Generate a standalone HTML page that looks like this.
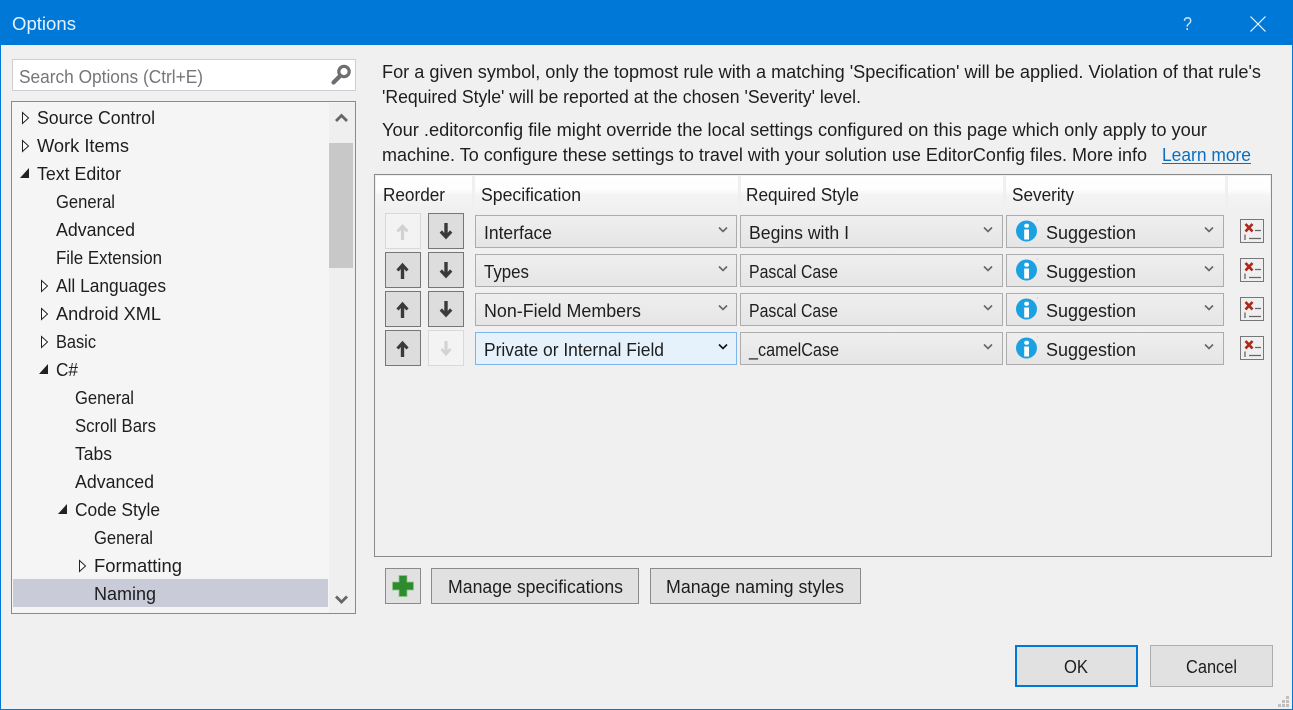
<!DOCTYPE html>
<html><head><meta charset="utf-8"><title>Options</title>
<style>
html,body{margin:0;padding:0;background:#f0f0f0;overflow:hidden}
svg{display:block}
text{font-family:"Liberation Sans",sans-serif;font-size:18px;fill:#1e1e1e}
.btn{fill:#e1e1e1;stroke:#8a8a8a;stroke-width:1}
.ab{fill:#dddddd;stroke:#767676;stroke-width:1}
.dis{fill:#f3f3f3;stroke:#d9d9d9;stroke-width:1}
.cb{fill:url(#cbg);stroke:#acacac;stroke-width:1}
.chev{fill:none;stroke:#666;stroke-width:1.6}
.open{fill:#fff;stroke:#222;stroke-width:1}
.exp{fill:#222}
</style></head><body>
<svg width="1293" height="710" viewBox="0 0 1293 710" xmlns="http://www.w3.org/2000/svg">
<defs>
<linearGradient id="cbg" x1="0" y1="0" x2="0" y2="1"><stop offset="0" stop-color="#efefef"/><stop offset="1" stop-color="#e5e5e5"/></linearGradient>
<linearGradient id="hdr" x1="0" y1="0" x2="0" y2="1"><stop offset="0" stop-color="#ffffff"/><stop offset=".4" stop-color="#fdfdfd"/><stop offset=".55" stop-color="#f4f4f4"/><stop offset="1" stop-color="#f0f0f0"/></linearGradient>
<g id="up" fill="none" stroke="#3a3a3a"><path d="M0 -6 V8" stroke-width="3.4"/><path d="M-5 -0.5 L0 -6 L5 -0.5" stroke-width="3"/></g>
<g id="dn" fill="none" stroke="#3a3a3a"><path d="M0 -8 V6" stroke-width="3.4"/><path d="M-5.2 0.5 L0 6 L5.2 0.5" stroke-width="3.2"/></g>
<g id="upd" fill="none" stroke="#d2d2d2"><path d="M0 -6 V8" stroke-width="3.2"/><path d="M-5 -0.5 L0 -6 L5 -0.5" stroke-width="2.8"/></g>
<g id="dnd" fill="none" stroke="#d2d2d2"><path d="M0 -7 V6" stroke-width="3"/><path d="M-4.5 1 L0 6 L4.5 1" stroke-width="2.8"/></g>
<g id="del"><rect x="0.5" y="0.5" width="23" height="23" fill="#efefef" stroke="#777"/><path d="M5.5 5 L12.5 12.5 M12.5 5 L5.5 12.5" stroke="#ad2a1a" stroke-width="2.7"/><path d="M15 11.5H21M5 15.5V21M9 19.5H21" stroke="#666" stroke-width="1.3" fill="none"/></g>
<g id="info"><circle cx="10.5" cy="10.5" r="10.5" fill="#1ba1e2"/><rect x="8.2" y="9" width="4.8" height="10" fill="#fff"/><rect x="8.2" y="3.2" width="4.8" height="4" rx="2" fill="#fff"/><rect x="21" y="-1" width="1" height="1" fill="#7fd0f0"/></g>
</defs>

<rect width="1293" height="710" fill="#f0f0f0"/>
<rect width="1293" height="45" fill="#0078d7"/>
<rect x="0" y="0" width="1" height="710" fill="#0078d7"/>
<rect x="1292" y="0" width="1" height="710" fill="#0078d7"/>
<rect x="0" y="709" width="1293" height="1" fill="#0078d7"/>
<text x="12" y="30" textLength="64" lengthAdjust="spacingAndGlyphs" style="fill:#e6f2fb">Options</text>
<text x="1183" y="30" textLength="9" lengthAdjust="spacingAndGlyphs" style="fill:#cfe5f7">?</text>
<path d="M1250.5 16.5 L1265.5 31.5 M1265.5 16.5 L1250.5 31.5" stroke="#f0f8fd" stroke-width="1.2" fill="none"/>

<!-- search -->
<rect x="12.5" y="59.5" width="343" height="31" fill="#fff" stroke="#ccced8"/>
<text x="19" y="83" textLength="184" lengthAdjust="spacingAndGlyphs" style="fill:#767676">Search Options (Ctrl+E)</text>
<circle cx="344" cy="71.5" r="5.2" fill="none" stroke="#6e6e6e" stroke-width="3.2"/>
<path d="M339.5 76.5 L333.5 82.5" stroke="#6e6e6e" stroke-width="4.2" stroke-linecap="round"/>

<!-- tree -->
<rect x="11.5" y="101.5" width="344" height="512" fill="#f5f5f5" stroke="#8a8a8a"/>
<rect x="329" y="103" width="26" height="510" fill="#efefef"/>
<rect x="329" y="143" width="24" height="125" fill="#c8c8c8"/>
<path d="M336 121 L341.5 115.5 L347 121" fill="none" stroke="#666" stroke-width="2.8"/>
<path d="M336 596.5 L341.5 602 L347 596.5" fill="none" stroke="#666" stroke-width="2.8"/>
<rect x="13" y="579" width="315" height="28" fill="#cacbd9"/>

<path class="open" d="M22.5 112.5 L28.5 118 L22.5 123.5Z"/>
<text x="37" y="124" textLength="118" lengthAdjust="spacingAndGlyphs">Source Control</text>
<path class="open" d="M22.5 140.5 L28.5 146 L22.5 151.5Z"/>
<text x="37" y="152" textLength="92" lengthAdjust="spacingAndGlyphs">Work Items</text>
<path class="exp" d="M29 168 L29 178 L20 178Z"/>
<text x="37" y="180" textLength="84" lengthAdjust="spacingAndGlyphs">Text Editor</text>
<text x="56" y="208" textLength="59" lengthAdjust="spacingAndGlyphs">General</text>
<text x="56" y="236" textLength="79" lengthAdjust="spacingAndGlyphs">Advanced</text>
<text x="56" y="264" textLength="106" lengthAdjust="spacingAndGlyphs">File Extension</text>
<path class="open" d="M41.5 280.5 L47.5 286 L41.5 291.5Z"/>
<text x="56" y="292" textLength="110" lengthAdjust="spacingAndGlyphs">All Languages</text>
<path class="open" d="M41.5 308.5 L47.5 314 L41.5 319.5Z"/>
<text x="56" y="320" textLength="105" lengthAdjust="spacingAndGlyphs">Android XML</text>
<path class="open" d="M41.5 336.5 L47.5 342 L41.5 347.5Z"/>
<text x="56" y="348" textLength="40" lengthAdjust="spacingAndGlyphs">Basic</text>
<path class="exp" d="M48 364 L48 374 L39 374Z"/>
<text x="56" y="376" textLength="22" lengthAdjust="spacingAndGlyphs">C#</text>
<text x="75" y="404" textLength="59" lengthAdjust="spacingAndGlyphs">General</text>
<text x="75" y="432" textLength="81" lengthAdjust="spacingAndGlyphs">Scroll Bars</text>
<text x="75" y="460" textLength="37" lengthAdjust="spacingAndGlyphs">Tabs</text>
<text x="75" y="488" textLength="79" lengthAdjust="spacingAndGlyphs">Advanced</text>
<path class="exp" d="M67 504 L67 514 L58 514Z"/>
<text x="75" y="516" textLength="85" lengthAdjust="spacingAndGlyphs">Code Style</text>
<text x="94" y="544" textLength="59" lengthAdjust="spacingAndGlyphs">General</text>
<path class="open" d="M79.5 560.5 L85.5 566 L79.5 571.5Z"/>
<text x="94" y="572" textLength="88" lengthAdjust="spacingAndGlyphs">Formatting</text>
<text x="94" y="600" textLength="62" lengthAdjust="spacingAndGlyphs">Naming</text>

<!-- top text -->
<text x="382" y="78" textLength="879" lengthAdjust="spacingAndGlyphs">For a given symbol, only the topmost rule with a matching 'Specification' will be applied. Violation of that rule's</text>
<text x="382" y="103" textLength="479" lengthAdjust="spacingAndGlyphs">'Required Style' will be reported at the chosen 'Severity' level.</text>
<text x="382" y="136" textLength="825" lengthAdjust="spacingAndGlyphs">Your .editorconfig file might override the local settings configured on this page which only apply to your</text>
<text x="382" y="161" textLength="765" lengthAdjust="spacingAndGlyphs">machine. To configure these settings to travel with your solution use EditorConfig files. More info</text>
<text x="1162" y="161" textLength="89" lengthAdjust="spacingAndGlyphs" style="fill:#0a6fc2">Learn more</text>
<rect x="1162" y="163" width="89" height="1" fill="#0a6fc2"/>

<!-- table -->
<rect x="374.5" y="174.5" width="897" height="382" fill="#f0f0f0" stroke="#8a8a8a"/>
<rect x="376" y="176" width="894" height="35" fill="url(#hdr)"/>
<rect x="472" y="176" width="3" height="35" fill="#f0f0f0"/>
<rect x="738" y="176" width="3" height="35" fill="#f0f0f0"/>
<rect x="1003" y="176" width="3" height="35" fill="#f0f0f0"/>
<rect x="1225" y="176" width="3" height="35" fill="#f0f0f0"/>
<text x="383" y="201" textLength="62" lengthAdjust="spacingAndGlyphs">Reorder</text>
<text x="481" y="201" textLength="100" lengthAdjust="spacingAndGlyphs">Specification</text>
<text x="746" y="201" textLength="113" lengthAdjust="spacingAndGlyphs">Required Style</text>
<text x="1012" y="201" textLength="62" lengthAdjust="spacingAndGlyphs">Severity</text>

<!-- row 1 -->
<rect class="dis" x="385.5" y="213.5" width="35" height="35"/><use href="#upd" x="402.5" y="232"/>
<rect class="ab" x="428.5" y="213.5" width="35" height="35"/><use href="#dn" x="446" y="231"/>
<rect class="cb" x="475.5" y="215.5" width="261" height="32"/>
<text x="484" y="239" textLength="68" lengthAdjust="spacingAndGlyphs">Interface</text>
<path class="chev" d="M719 227.5 L723 231.5 L727 227.5"/>
<rect class="cb" x="740.5" y="215.5" width="262" height="32"/>
<text x="749" y="239" textLength="100" lengthAdjust="spacingAndGlyphs">Begins with I</text>
<path class="chev" d="M984 227.5 L988 231.5 L992 227.5"/>
<rect class="cb" x="1006.5" y="215.5" width="217" height="32"/>
<use href="#info" x="1016" y="220.5"/>
<text x="1046" y="239" textLength="90" lengthAdjust="spacingAndGlyphs">Suggestion</text>
<path class="chev" d="M1205 227.5 L1209 231.5 L1213 227.5"/>
<use href="#del" x="1240" y="219"/>

<!-- row 2 -->
<rect class="ab" x="385.5" y="252.5" width="35" height="35"/><use href="#up" x="402.5" y="271"/>
<rect class="ab" x="428.5" y="252.5" width="35" height="35"/><use href="#dn" x="446" y="270"/>
<rect class="cb" x="475.5" y="254.5" width="261" height="32"/>
<text x="484" y="278" textLength="45" lengthAdjust="spacingAndGlyphs">Types</text>
<path class="chev" d="M719 266.5 L723 270.5 L727 266.5"/>
<rect class="cb" x="740.5" y="254.5" width="262" height="32"/>
<text x="749" y="278" textLength="89" lengthAdjust="spacingAndGlyphs">Pascal Case</text>
<path class="chev" d="M984 266.5 L988 270.5 L992 266.5"/>
<rect class="cb" x="1006.5" y="254.5" width="217" height="32"/>
<use href="#info" x="1016" y="259.5"/>
<text x="1046" y="278" textLength="90" lengthAdjust="spacingAndGlyphs">Suggestion</text>
<path class="chev" d="M1205 266.5 L1209 270.5 L1213 266.5"/>
<use href="#del" x="1240" y="258"/>

<!-- row 3 -->
<rect class="ab" x="385.5" y="291.5" width="35" height="35"/><use href="#up" x="402.5" y="310"/>
<rect class="ab" x="428.5" y="291.5" width="35" height="35"/><use href="#dn" x="446" y="309"/>
<rect class="cb" x="475.5" y="293.5" width="261" height="32"/>
<text x="484" y="317" textLength="157" lengthAdjust="spacingAndGlyphs">Non-Field Members</text>
<path class="chev" d="M719 305.5 L723 309.5 L727 305.5"/>
<rect class="cb" x="740.5" y="293.5" width="262" height="32"/>
<text x="749" y="317" textLength="89" lengthAdjust="spacingAndGlyphs">Pascal Case</text>
<path class="chev" d="M984 305.5 L988 309.5 L992 305.5"/>
<rect class="cb" x="1006.5" y="293.5" width="217" height="32"/>
<use href="#info" x="1016" y="298.5"/>
<text x="1046" y="317" textLength="90" lengthAdjust="spacingAndGlyphs">Suggestion</text>
<path class="chev" d="M1205 305.5 L1209 309.5 L1213 305.5"/>
<use href="#del" x="1240" y="297"/>

<!-- row 4 -->
<rect class="ab" x="385.5" y="330.5" width="35" height="35"/><use href="#up" x="402.5" y="349"/>
<rect class="dis" x="428.5" y="330.5" width="35" height="35"/><use href="#dnd" x="446" y="348"/>
<rect x="475.5" y="332.5" width="261" height="32" fill="#e5f1fb" stroke="#7eb4ea"/>
<text x="484" y="356" textLength="180" lengthAdjust="spacingAndGlyphs">Private or Internal Field</text>
<path class="chev" style="stroke:#111" d="M719 344.5 L723 348.5 L727 344.5"/>
<rect class="cb" x="740.5" y="332.5" width="262" height="32"/>
<text x="749" y="356" textLength="90" lengthAdjust="spacingAndGlyphs">_camelCase</text>
<path class="chev" d="M984 344.5 L988 348.5 L992 344.5"/>
<rect class="cb" x="1006.5" y="332.5" width="217" height="32"/>
<use href="#info" x="1016" y="337.5"/>
<text x="1046" y="356" textLength="90" lengthAdjust="spacingAndGlyphs">Suggestion</text>
<path class="chev" d="M1205 344.5 L1209 348.5 L1213 344.5"/>
<use href="#del" x="1240" y="336"/>

<!-- bottom buttons -->
<rect class="btn" x="385.5" y="568.5" width="35" height="35"/>
<path d="M399 575.5 H407 V582 H413.5 V590 H407 V596.5 H399 V590 H392.5 V582 H399Z" fill="#2e8b2e" stroke="#8cc88c" stroke-width="0.8"/>
<rect class="btn" x="431.5" y="568.5" width="207" height="35"/>
<text x="448" y="593" textLength="175" lengthAdjust="spacingAndGlyphs">Manage specifications</text>
<rect class="btn" x="650.5" y="568.5" width="210" height="35"/>
<text x="666" y="593" textLength="178" lengthAdjust="spacingAndGlyphs">Manage naming styles</text>

<rect x="1016" y="646" width="121" height="40" fill="#e1e1e1" stroke="#0078d7" stroke-width="2"/>
<text x="1064" y="673" textLength="24" lengthAdjust="spacingAndGlyphs">OK</text>
<rect x="1150.5" y="645.5" width="122" height="41" fill="#e1e1e1" stroke="#adadad"/>
<text x="1186" y="673" textLength="51" lengthAdjust="spacingAndGlyphs">Cancel</text>

<!-- grip -->
<g fill="#c0c0c0">
<rect x="1286" y="696" width="3" height="3"/>
<rect x="1282" y="700" width="3" height="3"/><rect x="1286" y="700" width="3" height="3"/>
<rect x="1278" y="704" width="3" height="3"/><rect x="1282" y="704" width="3" height="3"/><rect x="1286" y="704" width="3" height="3"/>
</g>
</svg>
</body></html>
